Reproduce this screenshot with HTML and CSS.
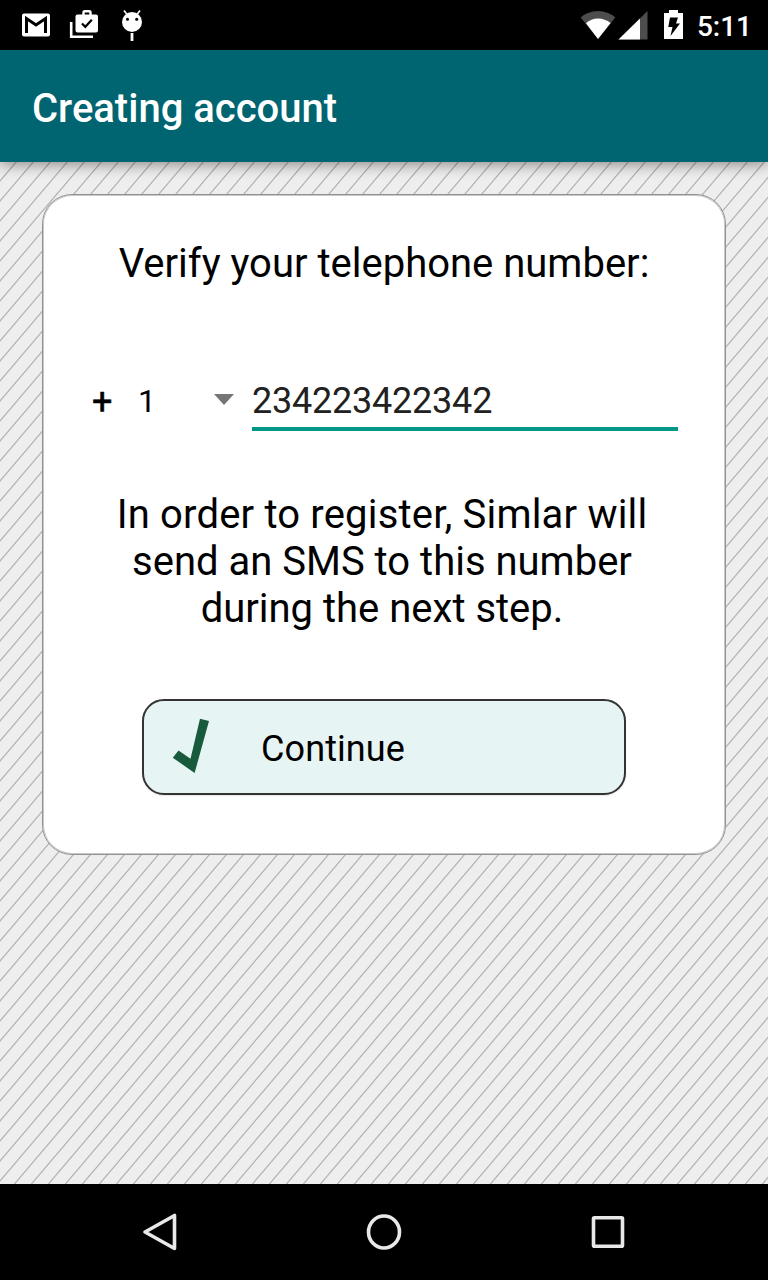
FILE: index.html
```html
<!DOCTYPE html>
<html lang="en">
<head>
<meta charset="utf-8">
<title>Creating account</title>
<link rel="stylesheet" href="styles.css">
</head>
<body>
<div class="screen">
  <header class="status">
    <svg class="status-left" width="160" height="50" viewBox="0 0 160 50">
      <rect x="22" y="13.500" width="28" height="23" rx="2" fill="#fff"/>
      <path d="M26.500 33V18.500L36 25l9.500-6.500V33" fill="none" stroke="#000" stroke-width="3"/>
      <path d="M71.200 22v14.700H93" fill="none" stroke="#fff" stroke-width="2.600"/>
      <rect x="75.500" y="14.500" width="22.500" height="18" rx="2" fill="#fff"/>
      <path d="M83.500 15v-2.500q0-1.300 1.300-1.300h4.400q1.300 0 1.300 1.300V15" fill="none" stroke="#fff" stroke-width="2.400"/>
      <path d="M82 23.500l3.300 3.300 6.500-7" fill="none" stroke="#000" stroke-width="2.200"/>
      <circle cx="132" cy="22" r="10" fill="#fff"/>
      <path d="M127.500 15l-3.500-4.500M136.500 15l3.500-4.500" stroke="#fff" stroke-width="1.600"/>
      <circle cx="127.500" cy="19.300" r="1.500"/><circle cx="136.700" cy="19.300" r="1.500"/>
      <path d="M132 33v8" stroke="#fff" stroke-width="2.800"/>
    </svg>
    <div class="status-right">
      <svg width="110" height="50" viewBox="580 0 110 50">
        <path d="M598 39L580.700 17.500Q588 11 598 11t17.300 6.500z" fill="#4d4d4d"/>
        <path d="M598 39L586 23.200Q591 18.500 598 18.500t12.600 4.500z" fill="#fff"/>
        <path d="M647.500 11v28.500h-29z" fill="#4d4d4d"/>
        <path d="M640 18.500v21h-21.500z" fill="#fff"/>
        <path d="M664 13h5v-3h9v3h5v26h-19z" fill="#fff"/>
        <path d="M670 17.500h8l-2 6h4L670.500 36l2-9h-4.200z"/>
      </svg>
      <span class="clock">5:11</span>
    </div>
  </header>
  <div class="appbar"><h1 class="title">Creating account</h1></div>
  <main class="content">
    <svg class="stripes" width="768" height="1022">
      <defs><pattern id="hatch" x="0" y="-1" width="17" height="20" patternUnits="userSpaceOnUse">
        <path d="M-1.700 22L18.700-2M-1.700 2L1.700-2M15.300 22L18.700 18" stroke="#b2b2b2" stroke-width="1.150"/>
      </pattern></defs>
      <rect width="768" height="1022" fill="url(#hatch)"/>
    </svg>
    <section class="card">
      <h2 class="heading">Verify your telephone number:</h2>
      <div class="phone">
        <span class="plus">+</span>
        <div class="country"><span>1</span><svg width="20" height="11" viewBox="0 0 20 11"><path d="M0 0h20L10 11z" fill="#757575"/></svg></div>
        <div class="number">234223422342</div>
      </div>
      <p class="info"><span class="lead">In order to register, Simlar will</span><br>send an SMS to this number<br>during the next step.</p>
      <div class="button" role="button">
        <svg class="check" width="37" height="56" viewBox="172 718 37 56"><path d="M200 718.800l9 2.100-14.400 52.100-21.800-15.300 5.700-7.300 12 8.300z" fill="#185a3c"/></svg>
        <span class="label">Continue</span>
      </div>
    </section>
  </main>
  <nav class="nav">
    <svg width="48" height="48" viewBox="136 1208 48 48"><path d="M174.500 1215.500v33L145 1232z"/></svg>
    <svg width="48" height="48" viewBox="360 1208 48 48"><ellipse cx="384" cy="1232" rx="15.500" ry="16"/></svg>
    <svg width="48" height="48" viewBox="584 1208 48 48"><rect x="593.500" y="1217.800" width="29" height="28.500" rx="1"/></svg>
  </nav>
</div>
</body>
</html>
```
FILE: styles.css
```css
* { box-sizing: border-box; }
body { margin: 0; font-family: Roboto, "Liberation Sans", sans-serif; color: #000; }
.screen { width: 768px; height: 1280px; display: flex; flex-direction: column; overflow: hidden; }
.status { height: 50px; background: #000; display: flex; justify-content: space-between; }
.status-right { display: flex; align-items: center; gap: 8px; padding-right: 16px; }
.status-right svg { margin-right: -1px; }
.clock { color: #fff; font-size: 28px; font-weight: 500; line-height: 50px; padding-top: 4px; }
.appbar { height: 112px; background: #006570; display: flex; align-items: center; padding: 6px 32px 0; box-shadow: 0 2px 14px rgba(0,0,0,.45); position: relative; z-index: 1; }
.title { margin: 0; color: #fff; font-size: 40px; font-weight: 500; line-height: 48px; }
.content { height: 1022px; background: #eee; padding: 32px 42px; position: relative; }
.stripes { position: absolute; inset: 0; }
.card { position: relative; height: 661px; background: #fff; border: 1px solid #929292; box-shadow: inset 0 0 0 1px #c8c8c8; border-radius: 30px; padding: 45px 47px 0; display: flex; flex-direction: column; align-items: center; }
.heading { margin: 0; font-size: 40px; font-weight: 400; line-height: 47px; }
.phone { align-self: stretch; display: flex; height: 64px; margin-top: 81px; }
.plus { width: 49px; padding-left: 2px; font-size: 36px; font-weight: 400; -webkit-text-stroke: .5px #000; line-height: 68px; }
.country { width: 95px; display: flex; align-items: center; justify-content: space-between; font-size: 32px; }
.country span { margin-left: -1px; padding-top: 2px; }
.country svg { margin-top: -2px; }
.number { width: 426px; margin-left: 18px; height: 63px; border-bottom: 4px solid #009688; font-size: 36px; letter-spacing: -.22px; line-height: 66px; color: #212121; }
.info { margin: 59px 0 0; padding-right: 4px; font-size: 40px; line-height: 47px; text-align: center; }
.lead { letter-spacing: .18px; }
.button { width: 484px; height: 96px; margin-top: 67px; border: 2px solid #333; border-radius: 22px; background: #e7f4f4; box-shadow: 0 1px 2px -1px rgba(0,0,0,.3); display: flex; align-items: center; gap: 52px; padding-left: 28px; font-size: 36px; }
.check { margin-top: -2px; }
.label { padding-top: 4px; letter-spacing: .1px; }
.nav { height: 96px; background: #000; display: flex; align-items: center; justify-content: space-between; padding: 0 136px; }
.nav svg { fill: none; stroke: #e8e8e8; stroke-width: 3.6; stroke-linejoin: round; }
```
